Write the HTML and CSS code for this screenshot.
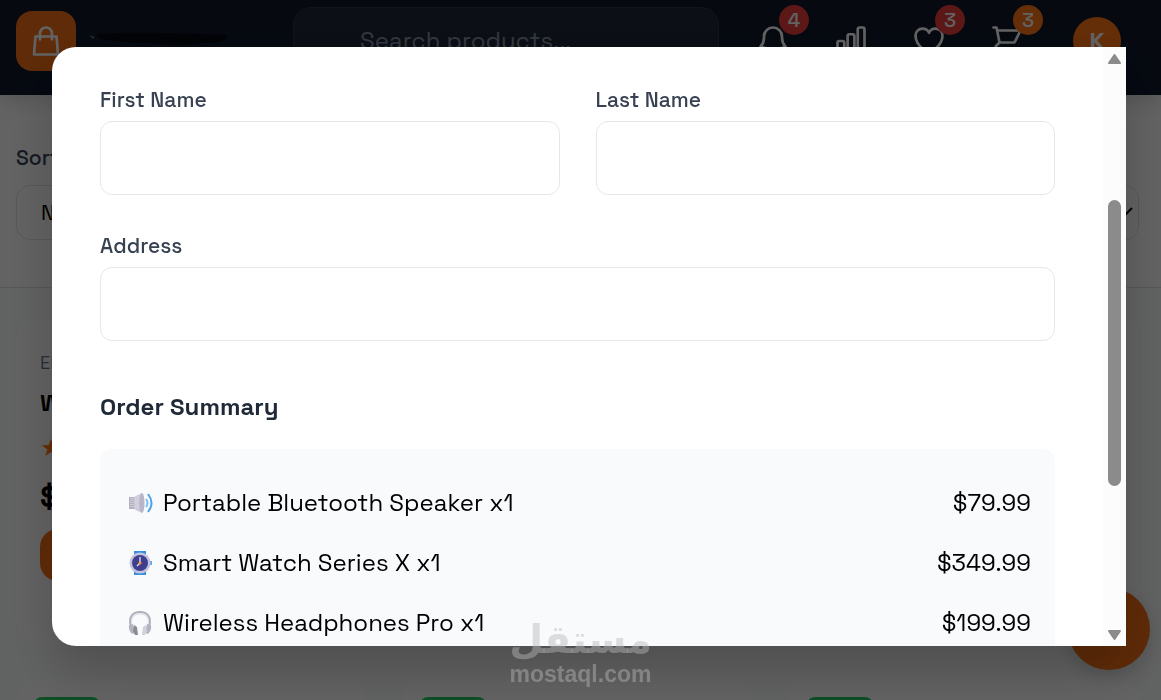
FILE: index.html
```html
<!DOCTYPE html>
<html lang="en">
<head>
    <meta charset="UTF-8">
    <meta name="viewport" content="width=device-width, initial-scale=1.0">
    <title>Checkout</title>
    <link rel="stylesheet" href="styles.css">
</head>
<body>
    <header class="header">
        <a class="brand" href="#" aria-label="Home">
            <span class="brand-logo">
                <svg class="icon" viewBox="0 0 24 24"><path d="M16 11V7a4 4 0 00-8 0v4M5 9h14l1 12H4L5 9z"/></svg>
            </span>
            <svg class="brand-name" viewBox="0 0 150 24">
                <path d="M8 5 Q40 3 76 4 T138 6 Q140 11 130 13 L110 15 Q60 17 12 10 Z" fill="#060a14"/>
                <path d="M1 6 L7 8 L5 10 Z" fill="#56637f"/>
            </svg>
        </a>
        <input class="search" type="search" placeholder="Search products..." aria-label="Search products">
        <nav class="actions">
            <button class="action" aria-label="Notifications">
                <svg class="icon" viewBox="0 0 24 24"><path d="M14.857 17.082a23.848 23.848 0 0 0 5.454-1.31A8.967 8.967 0 0 1 18 9.75V9A6 6 0 0 0 6 9v.75a8.967 8.967 0 0 1-2.312 6.022c1.733.64 3.56 1.085 5.455 1.31m5.714 0a24.255 24.255 0 0 1-5.714 0m5.714 0a3 3 0 1 1-5.714 0"/></svg>
                <span class="badge badge-red">4</span>
            </button>
            <button class="action" aria-label="Compare">
                <svg class="icon" viewBox="0 0 24 24"><path d="M3 13.125C3 12.504 3.504 12 4.125 12h2.25c.621 0 1.125.504 1.125 1.125v6.75C7.5 20.496 6.996 21 6.375 21h-2.25A1.125 1.125 0 0 1 3 19.875v-6.75ZM9.75 8.625c0-.621.504-1.125 1.125-1.125h2.25c.621 0 1.125.504 1.125 1.125v11.25c0 .621-.504 1.125-1.125 1.125h-2.25a1.125 1.125 0 0 1-1.125-1.125V8.625ZM16.5 4.125c0-.621.504-1.125 1.125-1.125h2.25C20.496 3 21 3.504 21 4.125v15.75c0 .621-.504 1.125-1.125 1.125h-2.25a1.125 1.125 0 0 1-1.125-1.125V4.125Z"/></svg>
            </button>
            <button class="action" aria-label="Wishlist">
                <svg class="icon" viewBox="0 0 24 24"><path d="M21 8.25c0-2.485-2.099-4.5-4.688-4.5-1.935 0-3.597 1.126-4.312 2.733-.715-1.607-2.377-2.733-4.313-2.733C5.1 3.75 3 5.765 3 8.25c0 7.22 9 12 9 12s9-4.78 9-12Z"/></svg>
                <span class="badge badge-red">3</span>
            </button>
            <button class="action" aria-label="Cart">
                <svg class="icon" viewBox="0 0 24 24"><path d="M3 3h2l.4 2M7 13h10l4-8H5.400M7 13L5.400 5M7 13l-2.293 2.293c-.630.630-.184 1.707.707 1.707H17m0 0a2 2 0 100 4 2 2 0 000-4zm-8 2a2 2 0 11-4 0 2 2 0 014 0z"/></svg>
                <span class="badge badge-orange">3</span>
            </button>
            <button class="avatar" aria-label="Account">K</button>
        </nav>
    </header>

    <section class="filters">
        <label for="sort">Sort</label>
        <div class="select-box">
            <select id="sort">
                <option>New</option>
            </select>
            <svg class="chevron" viewBox="0 0 16 10"><path d="M1 1l7 7 7-7"/></svg>
        </div>
    </section>

    <main class="products">
        <article class="card">
            <p class="category">Elec</p>
            <h2>Wifi</h2>
            <p class="stars">★★★★★</p>
            <p class="price">$199</p>
            <button class="add" aria-label="Add to cart"></button>
        </article>
        <article class="card"></article>
        <article class="card"></article>
        <article class="card"><span class="tag"></span></article>
        <article class="card"><span class="tag"></span></article>
        <article class="card"><span class="tag"></span></article>
    </main>

    <button class="chat" aria-label="Chat"></button>

    <div class="overlay">
        <div class="modal" role="dialog" aria-label="Checkout">
            <form class="modal-content">
                <div class="form-grid">
                    <div class="field">
                        <label for="firstName">First Name</label>
                        <input type="text" id="firstName">
                    </div>
                    <div class="field">
                        <label for="lastName">Last Name</label>
                        <input type="text" id="lastName">
                    </div>
                    <div class="field field-wide">
                        <label for="address">Address</label>
                        <input type="text" id="address">
                    </div>
                </div>
                <h3>Order Summary</h3>
                <ul class="summary">
                    <li>
                        <svg class="emoji" viewBox="0 0 26 26">
                            <path d="M1 7h6v12H1z" fill="#b4b0c2"/>
                            <path d="M6 7l8-4v20l-8-4z" fill="#cbc8d6"/>
                            <path d="M3 8v10M5 8v10M8 7v12M10 6v14" stroke="#e8e5ef" stroke-width="1" stroke-dasharray="1 1"/>
                            <ellipse cx="14" cy="13" rx="2.500" ry="10" fill="#b9b4c9"/>
                            <path d="M18 9q3 4 0 8" fill="none" stroke="#7cc0f5" stroke-width="2"/>
                            <path d="M20 4q7 9 0 18" fill="none" stroke="#4aa3ea" stroke-width="2"/>
                        </svg>
                        <span>Portable Bluetooth Speaker x1</span>
                        <span class="amount">$79.99</span>
                    </li>
                    <li>
                        <svg class="emoji" viewBox="0 0 26 26">
                            <path d="M6 1h12v6H6zM6 19h12v6H6z" fill="#3a8fdc"/>
                            <path d="M22 11h2v4h-2z" fill="#5aa9e8"/>
                            <circle cx="12" cy="13" r="10.500" fill="#c4c3e0"/>
                            <circle cx="12" cy="13" r="8" fill="#403f8f"/>
                            <path d="M12 7v6l-3 3" fill="none" stroke="#e6e6f5" stroke-width="1.300"/>
                            <circle cx="12" cy="13" r="1.500" fill="#f59a3c"/>
                        </svg>
                        <span>Smart Watch Series X x1</span>
                        <span class="amount">$349.99</span>
                    </li>
                    <li>
                        <svg class="emoji" viewBox="0 0 26 26">
                            <path d="M3 16C0 7 5 2 12 2s12 5 9 14" fill="none" stroke="#b0aebb" stroke-width="2"/>
                            <path d="M4 15C2 8 6 4 12 4s10 4 8 11" fill="none" stroke="#dddbe4" stroke-width="1"/>
                            <path d="M1 15l4-1 2 9-3 1q-4-4-3-9z" fill="#b5b3bf"/>
                            <path d="M6 15l3 2 1 8H7l-2-4z" fill="#8b8a96"/>
                            <path d="M23 15l-4-1-2 9 3 1q4-4 3-9z" fill="#b5b3bf"/>
                            <path d="M18 15l-3 2-1 8h3l2-4z" fill="#d2d0da"/>
                        </svg>
                        <span>Wireless Headphones Pro x1</span>
                        <span class="amount">$199.99</span>
                    </li>
                </ul>
            </form>
            <div class="scrollbar" aria-hidden="true">
                <svg class="arrow" viewBox="0 0 15 12"><path d="M7.500 2l5.500 8H2z"/></svg>
                <div class="track"><div class="thumb"></div></div>
                <svg class="arrow" viewBox="0 0 15 12"><path d="M7.500 10l5.500-8H2z"/></svg>
            </div>
        </div>
    </div>

    <div class="watermark">
        <span class="watermark-ar" lang="ar">مستقل</span>
        <span class="watermark-en">mostaql.com</span>
    </div>
</body>
</html>
```

FILE: styles.css
```css
* {
    box-sizing: border-box;
    margin: 0;
    padding: 0;
}

body {
    display: flex;
    flex-direction: column;
    font-family: "Space Grotesk", Inter, "Liberation Sans", sans-serif;
    font-size: 24px;
    line-height: 36px;
    color: #000;
    background-color: #f3f4f4;
    height: 100vh;
    overflow: hidden;
}

button, input, select {
    font: inherit;
}

button {
    border: none;
    cursor: pointer;
}

.icon {
    width: 36px;
    height: 36px;
    fill: none;
    stroke: currentColor;
    stroke-width: 1.8;
    stroke-linecap: round;
    stroke-linejoin: round;
}

/* header */
.header {
    position: relative;
    display: flex;
    align-items: center;
    gap: 24px;
    padding: 7px 40px 20px 16px;
    background-color: #0f172a;
    box-shadow: 0 6px 18px rgba(0, 0, 0, 0.15);
}

.brand {
    display: flex;
    align-items: center;
    gap: 12px;
    flex: 0 0 253px;
}

.brand-logo {
    display: flex;
    align-items: center;
    justify-content: center;
    width: 60px;
    height: 60px;
    border-radius: 16px;
    background-color: #ee6c15;
    color: #f5f5f5;
}

.brand-name {
    width: 150px;
    height: 24px;
}

.search {
    flex: 1;
    min-width: 0;
    height: 68px;
    padding: 0 66px 2px;
    border: 1px solid #2a3346;
    border-radius: 18px;
    background-color: #1e2736;
    color: #fff;
}

.search::placeholder {
    color: #7f8ba0;
    opacity: 1;
}

.actions {
    display: flex;
    align-items: center;
    gap: 18px;
}

.action {
    position: relative;
    display: flex;
    align-items: center;
    justify-content: center;
    width: 60px;
    height: 60px;
    background: none;
    color: #f5f5f5;
}

.badge {
    position: absolute;
    top: -6px;
    right: -6px;
    width: 30px;
    height: 30px;
    border-radius: 50%;
    font-size: 20px;
    font-weight: 500;
    line-height: 30px;
    text-align: center;
}

.badge-red {
    background-color: #e63a3a;
}

.badge-orange {
    background-color: #f97316;
}

.avatar {
    width: 48px;
    height: 48px;
    margin-left: 18px;
    border-radius: 50%;
    background-color: #f97316;
    color: #f5f5f5;
    font-weight: 700;
}

/* sorting */
.filters {
    padding: 48px 22px 47px 16px;
    border-bottom: 1px solid #d9dadc;
    background-color: #f7f7f7;
}

.filters label {
    display: block;
    margin-bottom: 12px;
    font-size: 21px;
    line-height: 30px;
    color: #334155;
    font-weight: 500;
}

.select-box {
    position: relative;
}

.select-box select {
    display: block;
    width: 100%;
    height: 55px;
    padding: 0 24px;
    appearance: none;
    border: 1px solid #dcdddf;
    border-radius: 14px;
    background-color: #f7f7f7;
    font-size: 21px;
    color: #000;
}

.chevron {
    position: absolute;
    top: 22px;
    right: 6px;
    width: 16px;
    height: 10px;
    fill: none;
    stroke: #000;
    stroke-width: 2;
}

/* products */
.products {
    display: grid;
    grid-template-columns: repeat(3, 1fr);
    align-content: start;
    gap: 36px;
    flex: 1;
    min-height: 0;
    overflow: hidden;
    padding: 30px 22px 0 16px;
}

.card {
    min-height: 325px;
    padding: 30px 24px;
    border-radius: 24px;
    background-color: #f7f7f7;
}

.category {
    font-size: 18px;
    line-height: 30px;
    color: #64748b;
}

.card h2 {
    margin: 7px 0 8px;
    font-size: 24px;
    line-height: 36px;
}

.stars {
    font-size: 21px;
    line-height: 40px;
    color: #f97316;
}

.price {
    margin: 6px 0 10px;
    font-size: 30px;
    font-weight: 700;
    line-height: 44px;
}

.add {
    width: 100%;
    height: 52px;
    border-radius: 18px;
    background-color: #ee6c15;
}

.tag {
    display: block;
    width: 66px;
    height: 30px;
    margin: -12px -6px;
    border-radius: 8px;
    background-color: #22c55e;
}

.chat {
    position: fixed;
    right: 11px;
    bottom: 30px;
    width: 82px;
    height: 82px;
    border-radius: 50%;
    background-color: #ee6c15;
    box-shadow: 0 6px 18px rgba(0, 0, 0, 0.15);
}

/* checkout modal */
.overlay {
    position: fixed;
    inset: 0;
    display: flex;
    padding: 47px 35px 54px 52px;
    background-color: rgba(0, 0, 0, 0.6);
}

.modal {
    display: flex;
    flex: 1;
    overflow: hidden;
    border-radius: 24px 0 0 24px;
    background-color: #fff;
    box-shadow: 0 25px 50px rgba(0, 0, 0, 0.2);
}

.modal-content {
    flex: 1;
    overflow: hidden;
    padding: 38px 48px;
}

.form-grid {
    display: grid;
    grid-template-columns: 1fr 1fr;
    gap: 36px;
}

.field label {
    display: block;
    margin-bottom: 6px;
    font-size: 21px;
    font-weight: 500;
    line-height: 30px;
    color: #374151;
}

.field input {
    display: block;
    width: 100%;
    height: 74px;
    padding: 0 24px;
    border: 1px solid #e5e7eb;
    border-radius: 12px;
    background-color: #fff;
}

.field-wide {
    grid-column: span 2;
}

.modal h3 {
    margin: 48px 0 24px;
    font-size: 24px;
    line-height: 36px;
    color: #1f2937;
}

.summary {
    padding: 24px;
    border-radius: 12px;
    background-color: #f8fafc;
    list-style: none;
}

.summary li {
    display: flex;
    align-items: center;
    padding: 12px 0;
}

.emoji {
    width: 26px;
    height: 26px;
    margin: 0 9px 0 4px;
}

.amount {
    margin-left: auto;
}

.scrollbar {
    display: flex;
    flex-direction: column;
    align-items: center;
    width: 23px;
    padding: 6px 0 5px;
    background-color: #fcfcfc;
}

.arrow {
    width: 15px;
    height: 12px;
    fill: #8b8b8b;
    stroke: #8b8b8b;
    stroke-width: 2;
    stroke-linejoin: round;
}

.track {
    display: flex;
    flex-direction: column;
    flex: 1;
    padding-top: 135px;
}

.thumb {
    width: 13px;
    height: 286px;
    border-radius: 7px;
    background-color: #8b8b8b;
}

.watermark {
    position: fixed;
    left: 0;
    right: 0;
    bottom: 12px;
    display: flex;
    flex-direction: column;
    align-items: center;
    color: rgba(184, 184, 184, 0.45);
    pointer-events: none;
}

.watermark-ar {
    font-family: "DejaVu Sans", sans-serif;
    font-size: 39px;
    font-weight: 700;
    line-height: 40px;
}

.watermark-en {
    font-family: "Liberation Sans", Arial, sans-serif;
    font-size: 23px;
    font-weight: 700;
    line-height: 28px;
}
```
